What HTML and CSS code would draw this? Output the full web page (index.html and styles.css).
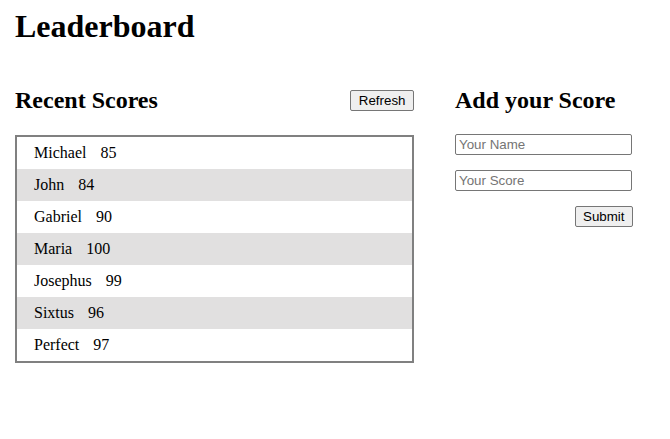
FILE: index.html
```html
<!DOCTYPE html>
<html>
<head>
<meta charset="utf-8">
<link rel="stylesheet" href="styles.css">
</head>
<body>
<div class="page">
  <h1 class="title">Leaderboard</h1>
  <div class="columns">
    <section class="scores">
      <div class="scores-head">
        <h2 class="heading">Recent Scores</h2>
        <button class="btn">Refresh</button>
      </div>
      <ul class="list">
        <li class="row"><span class="name">Michael</span><span>85</span></li>
        <li class="row"><span class="name">John</span><span>84</span></li>
        <li class="row"><span class="name">Gabriel</span><span>90</span></li>
        <li class="row"><span class="name">Maria</span><span>100</span></li>
        <li class="row"><span class="name">Josephus</span><span>99</span></li>
        <li class="row"><span class="name">Sixtus</span><span>96</span></li>
        <li class="row"><span class="name">Perfect</span><span>97</span></li>
      </ul>
    </section>
    <section class="add">
      <h2 class="heading">Add your Score</h2>
      <form class="form">
        <input class="field" type="text" placeholder="Your Name">
        <input class="field" type="text" placeholder="Your Score">
        <div class="actions"><button class="btn" type="button">Submit</button></div>
      </form>
    </section>
  </div>
</div>
</body>
</html>
```
FILE: styles.css
```css
html, body {
  margin: 0;
  padding: 0;
  background: #fff;
  font-family: "Liberation Serif", "Times New Roman", serif;
  color: #000;
}
.page {
  padding: 8px 15px;
}
.title {
  margin: 0;
  font-size: 32px;
  line-height: 37px;
  font-weight: bold;
}
.columns {
  display: flex;
  align-items: flex-start;
  gap: 41px;
  margin-top: 41px;
}
.scores {
  width: 399px;
}
.scores-head {
  display: flex;
  justify-content: space-between;
  align-items: flex-start;
}
.heading {
  margin: 0;
  font-size: 24px;
  line-height: 28px;
  font-weight: bold;
}
.btn {
  box-sizing: border-box;
  height: 21px;
  font-family: Arial, "Liberation Sans", sans-serif;
  font-size: 13.333px;
  line-height: 15px;
  padding: 2px 7.5px;
  margin-top: 4px;
  border: 1px solid #767676;
  border-radius: 2px;
  background: #efefef;
  color: #000;
}
.list {
  list-style: none;
  margin: 21px 0 0;
  padding: 0;
  border: 2px solid #808080;
}
.row {
  height: 32px;
  display: flex;
  align-items: center;
  padding-left: 17px;
  font-size: 16px;
  box-sizing: border-box;
}
.row:nth-child(even) {
  background: #e1e0e0;
}
.name {
  margin-right: 14px;
}
.add {
  width: 178px;
}
.form {
  display: flex;
  flex-direction: column;
  margin-top: 20px;
}
.field {
  box-sizing: border-box;
  width: 177px;
  height: 21px;
  margin: 0 0 15px;
  padding: 1px 3px;
  font-family: Arial, "Liberation Sans", sans-serif;
  font-size: 13.333px;
  border: 1px solid #767676;
  border-radius: 2px;
}
.field::placeholder {
  color: #757575;
}
.actions {
  display: flex;
  justify-content: flex-end;
}
.actions .btn {
  margin-top: 0;
}
```
